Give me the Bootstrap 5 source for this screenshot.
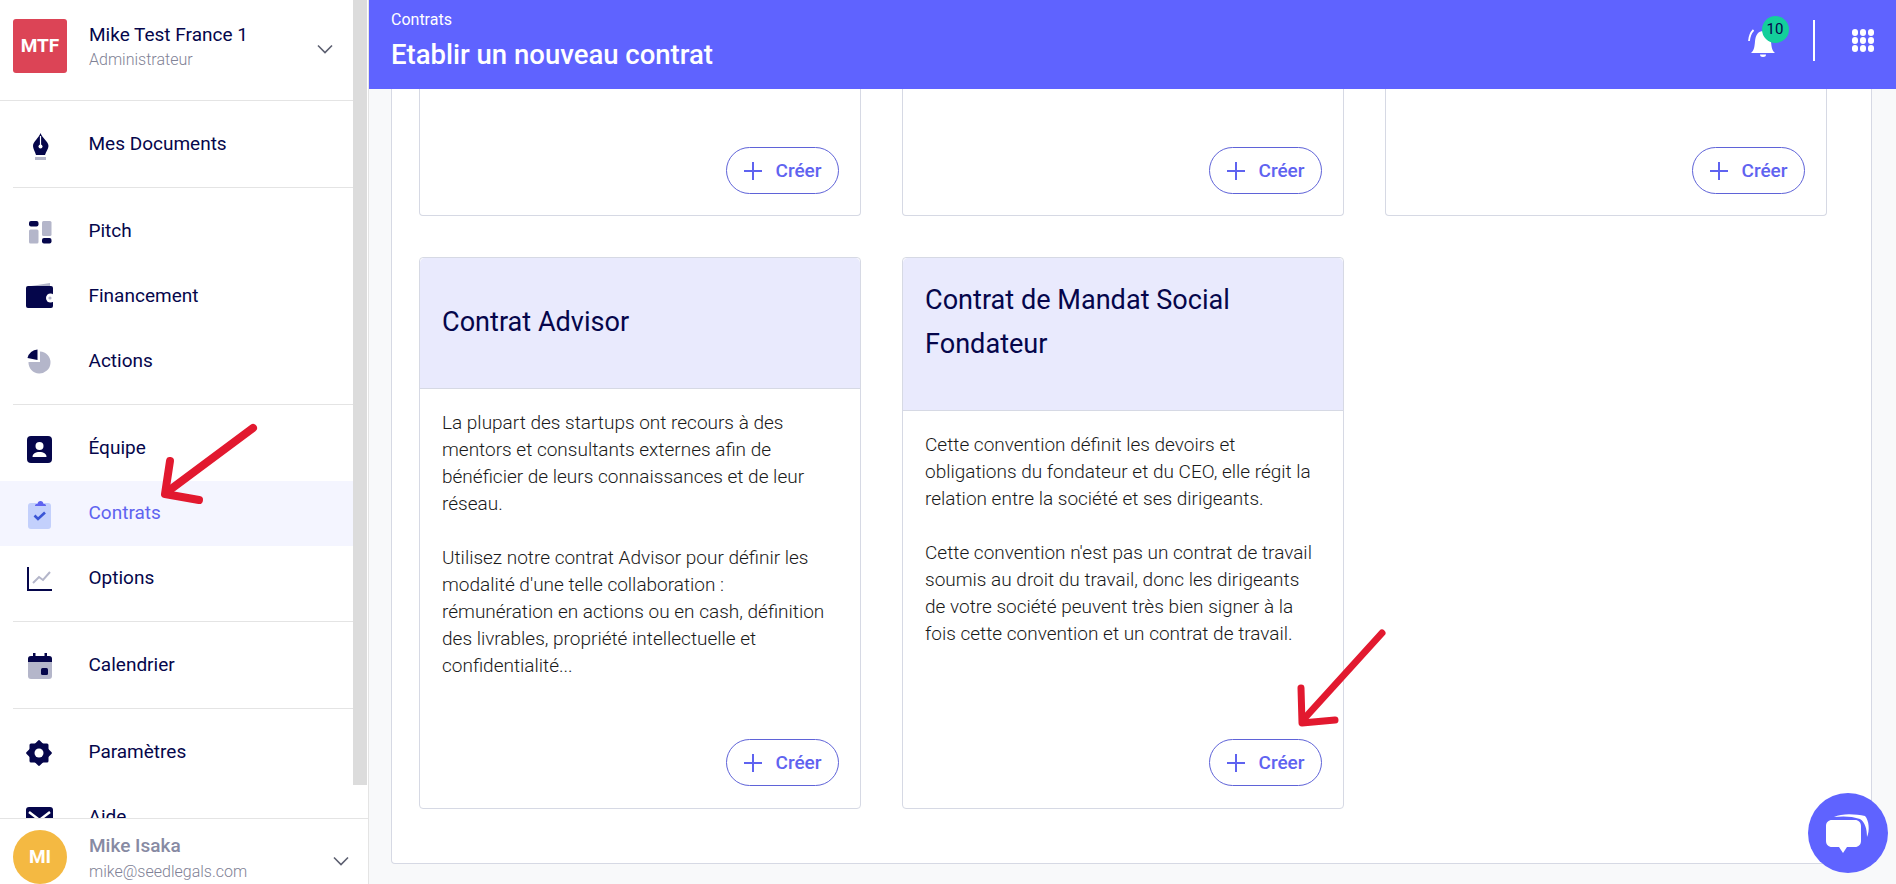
<!DOCTYPE html>
<html lang="fr">
<head>
  <meta charset="UTF-8"/>
  <title>Etablir un nouveau contrat</title>
  <link href="https://cdn.jsdelivr.net/npm/bootstrap@5.3.0/dist/css/bootstrap.min.css" rel="stylesheet"/>
  <style>
    body { font-family: Roboto, "Liberation Sans", sans-serif; color: #05064b; background: #f8f9fa; height: 884px; overflow: hidden; }

    /* sidebar */
    .side { width: 369px; flex: none; background: #fff; border-right: 1px solid #e4e4e4; height: 884px; }
    .side-scroll { height: 818px; overflow: hidden; }
    .side-inner { width: 353px; flex: none; }
    .scroll-track { width: 15px; flex: none; }
    .scroll-thumb { height: 785px; width: 14px; background: #dcdcdc; }
    .account { height: 101px; border-bottom: 1px solid #e4e4e4; padding: 19px 0 0 13px; }
    .logo-box { width: 54px; height: 54px; border-radius: 3px; background: #dc4456; color: #fff; font-weight: 700; font-size: 19px; }
    .who { margin-left: 22px; }
    .who-name { font-size: 19px; line-height: 24px; margin-top: 4px; }
    .who-role { font-size: 16px; line-height: 24px; margin-top: 1px; font-weight: 300; color: #7f8296; }
    .side-group { padding: 10.5px 0; margin-left: 13px; border-bottom: 1px solid #e4e4e4; }
    .side-group.last { border-bottom: 0; }
    .side-link { height: 65px; margin-left: -13px; padding-left: 23px; font-size: 19px; color: #05064b; text-decoration: none; }
    .side-link svg { margin-right: 33.5px; flex: none; }
    .side-link.on { background: #f4f5ff; color: #5f63f0; }
    .side-foot { height: 66px; border-top: 1px solid #e4e4e4; padding: 11px 0 0 13px; position: relative; background: #fff; }
    .face { width: 54px; height: 54px; border-radius: 50%; background: #f4b942; color: #fff; font-weight: 700; font-size: 19px; }
    .foot-name { font-size: 19px; font-weight: 500; line-height: 24px; color: #878aa3; margin-top: 4px; }
    .foot-mail { font-size: 16px; font-weight: 300; line-height: 24px; margin-top: 2px; color: #7f8296; }
    .foot-arrow { margin: 25px 19px 0 0; }
    .acct-arrow { margin: 24px 20px 0 0; }

    /* header */
    .topbar { height: 89px; background: #5f63ff; color: #fff; padding: 0 22px; flex: none; position: relative; z-index: 2; }
    .crumb { font-size: 16px; line-height: 20px; padding-top: 10px; }
    .page-title { font-size: 27.5px; font-weight: 500; line-height: 34px; margin: 8px 0 0; }
    .bar-tools { padding-top: 20px; }
    .bell-wrap { width: 40px; height: 40px; position: relative; }
    .bell-count { position: absolute; left: 18.5px; top: -5px; width: 27px; height: 27px; border-radius: 50%; background: #14cf9b; color: #05064b; font-size: 15px; }
    .bar-sep { width: 2px; height: 41px; background: #fff; margin: 0 36.5px 0 30px; }
    .dots { display: grid; grid-template-columns: repeat(3, 6.5px); gap: 1.5px; }
    .dots i { width: 6.5px; height: 6.5px; border-radius: 50%; background: #fff; display: block; }

    /* panel with cards */
    .panel { width: 1481px; height: 775px; margin-left: 22px; padding: 0 44px 0 27px; background: #fff; border: 1px solid #d6d9e4; border-top: 0; border-radius: 0 0 4px 4px; }
    .deck { --bs-gutter-x: 41px; --bs-gutter-y: 41px; }
    .cut-card { height: 127px; }
    .full-card { height: 552px; }
    .cut-card, .full-card { border-color: #d6d9e4; border-radius: 4px; }
    .cut-card { border-top: 0; border-top-left-radius: 0; border-top-right-radius: 0; }
    .deal-head { min-height: 131px; padding: 43px 22px; background: #e9eafd; border-bottom-color: #d6d9e4; }
    .deal-head.two-line { padding: 21px 22px 44px; }
    .deal-title { font-size: 27.1px; font-weight: 400; line-height: 43.5px; margin: 0; color: #05064b; }
    .deal-body { padding: 20px 22px 22px; font-size: 19px; line-height: 27px; font-weight: 300; color: #1a1a1a; }
    .cut-card .deal-body { padding-bottom: 21px; }
    .make-btn { width: 113px; height: 47px; margin-right: -1px; border: 1px solid #5f63d8; border-radius: 24px; background: #fff; color: #5f63f0; font-size: 19px; font-weight: 500; padding: 0; }
    .make-btn svg { margin-right: 12px; }

    /* things that sit over the page */
    .chat-btn { position: absolute; left: 1808px; top: 793px; width: 80px; height: 80px; border-radius: 50%; background: #5f63ff; z-index: 5; }
    .red-arrow { position: absolute; left: 0; top: 0; z-index: 6; pointer-events: none; }
  </style>
</head>
<body class="d-flex position-relative">

  <!-- Sidebar -->
  <aside class="side d-flex flex-column">
    <div class="side-scroll d-flex">
      <div class="side-inner">
        <div class="account d-flex">
          <div class="logo-box d-flex align-items-center justify-content-center">MTF</div>
          <div class="who flex-grow-1">
            <div class="who-name">Mike Test France 1</div>
            <div class="who-role">Administrateur</div>
          </div>
          <svg class="acct-arrow" width="16" height="12" viewBox="0 0 16 12" fill="none" stroke="#5c5f70" stroke-width="1.6"><path d="M1 2.5l7 7 7-7"/></svg>
        </div>

        <div class="side-group">
          <a class="side-link d-flex align-items-center" href="#">
            <svg width="32" height="32" viewBox="0 0 32 32"><path d="M17.5 5C16 10 10 13.500 10 18c0 2.500 2 5.500 3 9h9c1-3.500 3.500-6.500 3.500-9C25.500 13.500 19 10 17.500 5z" fill="#05064b"/><path d="M17.500 8v9" stroke="#fff" stroke-width="1.200"/><circle cx="17.500" cy="18.500" r="2" fill="#fff"/><rect x="12" y="29" width="11" height="3" fill="#b4b6ca"/></svg>
            Mes Documents
          </a>
        </div>

        <div class="side-group">
          <a class="side-link d-flex align-items-center" href="#">
            <svg width="32" height="32" viewBox="0 0 32 32"><rect x="6" y="6" width="9.500" height="5.500" rx="2" fill="#05064b"/><rect x="6" y="14.500" width="9.500" height="14" rx="1.500" fill="#b4b6ca"/><rect x="19" y="6" width="9.500" height="15" rx="1.500" fill="#b4b6ca"/><rect x="19" y="23" width="9.500" height="5.500" rx="2" fill="#05064b"/></svg>
            Pitch
          </a>
          <a class="side-link d-flex align-items-center" href="#">
            <svg width="32" height="32" viewBox="0 0 32 32"><path d="M8 6L27 3v3z" fill="#b4b6ca"/><rect x="3" y="6" width="27" height="22" rx="2" fill="#05064b"/><circle cx="27.500" cy="18" r="4.500" fill="#fff"/><circle cx="27" cy="18" r="1.600" fill="#b4b6ca"/></svg>
            Financement
          </a>
          <a class="side-link d-flex align-items-center" href="#">
            <svg width="32" height="32" viewBox="0 0 32 32"><path d="M17 6.500a11 11 0 1 1-11.500 10.500H17z" fill="#b4b6ca"/><path d="M14.500 4.500v10.500L4.500 13a11 11 0 0 1 10-8.500z" fill="#05064b"/></svg>
            Actions
          </a>
        </div>

        <div class="side-group">
          <a class="side-link d-flex align-items-center" href="#">
            <svg width="32" height="32" viewBox="0 0 32 32"><rect x="4" y="4" width="25" height="27" rx="4" fill="#05064b"/><circle cx="16.500" cy="14" r="4" fill="#fff"/><path d="M9.500 25c0-3.500 3-5 7-5s7 1.500 7 5z" fill="#fff"/></svg>
            Équipe
          </a>
          <a class="side-link on d-flex align-items-center" href="#">
            <svg width="32" height="32" viewBox="0 0 32 32"><rect x="5" y="6" width="23" height="26" rx="3" fill="#c3d0fc"/><path d="M12 9c0-1.500.5-2 2.500-2 .3-2 1.200-3 3-3s2.700 1 3 3c2 0 2.500.5 2.500 2z" fill="#5f63f0"/><path d="M11.500 18.500l3.500 3.500 7-6.500" fill="none" stroke="#3a55d6" stroke-width="2.600"/></svg>
            Contrats
          </a>
          <a class="side-link d-flex align-items-center" href="#">
            <svg width="32" height="32" viewBox="0 0 32 32"><path d="M5 5v23h24" fill="none" stroke="#05064b" stroke-width="2"/><path d="M10 21l6-6 4 3 7-8" fill="none" stroke="#b4b6ca" stroke-width="2"/></svg>
            Options
          </a>
        </div>

        <div class="side-group">
          <a class="side-link d-flex align-items-center" href="#">
            <svg width="32" height="32" viewBox="0 0 32 32"><rect x="5" y="7" width="24" height="23" rx="3" fill="#b4b6ca"/><path d="M5 13v-3a3 3 0 0 1 3-3h18a3 3 0 0 1 3 3v3z" fill="#05064b"/><rect x="10" y="4" width="2.500" height="4" fill="#05064b"/><rect x="21.500" y="4" width="2.500" height="4" fill="#05064b"/><rect x="18" y="19" width="7" height="7" rx="1.500" fill="#05064b"/></svg>
            Calendrier
          </a>
        </div>

        <div class="side-group last">
          <a class="side-link d-flex align-items-center" href="#">
            <svg width="32" height="32" viewBox="0 0 32 32"><rect x="6.500" y="7.500" width="19" height="19" rx="1.500" fill="#05064b"/><rect x="6.500" y="7.500" width="19" height="19" rx="1.500" fill="#05064b" transform="rotate(45 16 17)"/><circle cx="16" cy="17" r="4.500" fill="#fff"/></svg>
            Paramètres
          </a>
          <a class="side-link d-flex align-items-center" href="#">
            <svg width="32" height="32" viewBox="0 0 32 32"><rect x="3" y="6" width="27" height="21" rx="3" fill="#05064b"/><path d="M6 11l10.500 8L27 11" fill="none" stroke="#fff" stroke-width="2.500"/></svg>
            Aide
          </a>
        </div>
      </div>
      <div class="scroll-track ms-auto"><div class="scroll-thumb"></div></div>
    </div>

    <div class="side-foot d-flex">
      <div class="face d-flex align-items-center justify-content-center">MI</div>
      <div class="who flex-grow-1">
        <div class="foot-name">Mike Isaka</div>
        <div class="foot-mail">mike@seedlegals.com</div>
      </div>
      <svg class="foot-arrow" width="16" height="12" viewBox="0 0 16 12" fill="none" stroke="#5c5f70" stroke-width="1.6"><path d="M1 2.500l7 7 7-7"/></svg>
    </div>
  </aside>

  <!-- Main -->
  <main class="flex-grow-1 d-flex flex-column overflow-hidden">
    <header class="topbar d-flex justify-content-between align-items-start">
      <div>
        <div class="crumb">Contrats</div>
        <h1 class="page-title">Etablir un nouveau contrat</h1>
      </div>
      <div class="bar-tools d-flex align-items-center">
        <div class="bell-wrap">
          <svg width="40" height="40" viewBox="0 0 40 40"><path d="M8 32c3-2.500 3.500-6 4-11.500C12.500 14 15.500 10 20 10s7.500 4 8 10.500c.5 5.500 1 9 4 11.500z" fill="#fff"/><path d="M17 33.500h6a3 2.500 0 0 1-6 0z" fill="#fff"/><path d="M6 20c.3-4 1.500-8 4.500-11" fill="none" stroke="#fff" stroke-width="1.800"/></svg>
          <span class="bell-count d-flex align-items-center justify-content-center">10</span>
        </div>
        <div class="bar-sep"></div>
        <div class="dots"><i></i><i></i><i></i><i></i><i></i><i></i><i></i><i></i><i></i></div>
      </div>
    </header>

    <section class="panel">
      <div class="row row-cols-3 deck">
        <div class="col">
          <div class="card cut-card"><div class="mt-auto d-flex justify-content-end deal-body"><button class="make-btn d-flex align-items-center justify-content-center"><svg width="20" height="20" viewBox="0 0 20 20" stroke="#5f63f0" stroke-width="2"><path d="M10 1v18M1 10h18"/></svg>Créer</button></div></div>
        </div>
        <div class="col">
          <div class="card cut-card"><div class="mt-auto d-flex justify-content-end deal-body"><button class="make-btn d-flex align-items-center justify-content-center"><svg width="20" height="20" viewBox="0 0 20 20" stroke="#5f63f0" stroke-width="2"><path d="M10 1v18M1 10h18"/></svg>Créer</button></div></div>
        </div>
        <div class="col">
          <div class="card cut-card"><div class="mt-auto d-flex justify-content-end deal-body"><button class="make-btn d-flex align-items-center justify-content-center"><svg width="20" height="20" viewBox="0 0 20 20" stroke="#5f63f0" stroke-width="2"><path d="M10 1v18M1 10h18"/></svg>Créer</button></div></div>
        </div>

        <div class="col">
          <div class="card full-card">
            <div class="card-header deal-head d-flex align-items-center"><h2 class="deal-title">Contrat Advisor</h2></div>
            <div class="card-body deal-body d-flex flex-column">
              <div>La plupart des startups ont recours à des mentors et consultants externes afin de bénéficier de leurs connaissances et de leur réseau.<br><br>Utilisez notre contrat Advisor pour définir les modalité d'une telle collaboration : rémunération en actions ou en cash, définition des livrables, propriété intellectuelle et confidentialité...</div>
              <div class="mt-auto d-flex justify-content-end"><button class="make-btn d-flex align-items-center justify-content-center"><svg width="20" height="20" viewBox="0 0 20 20" stroke="#5f63f0" stroke-width="2"><path d="M10 1v18M1 10h18"/></svg>Créer</button></div>
            </div>
          </div>
        </div>
        <div class="col">
          <div class="card full-card">
            <div class="card-header deal-head two-line"><h2 class="deal-title">Contrat de Mandat Social Fondateur</h2></div>
            <div class="card-body deal-body d-flex flex-column">
              <div>Cette convention définit les devoirs et obligations du fondateur et du CEO, elle régit la relation entre la société et ses dirigeants.<br><br>Cette convention n'est pas un contrat de travail soumis au droit du travail, donc les dirigeants de votre société peuvent très bien signer à la fois cette convention et un contrat de travail.</div>
              <div class="mt-auto d-flex justify-content-end"><button class="make-btn d-flex align-items-center justify-content-center"><svg width="20" height="20" viewBox="0 0 20 20" stroke="#5f63f0" stroke-width="2"><path d="M10 1v18M1 10h18"/></svg>Créer</button></div>
            </div>
          </div>
        </div>
      </div>
    </section>
  </main>

  <!-- Chat bubble -->
  <div class="chat-btn d-flex align-items-center justify-content-center">
    <svg width="48" height="44" viewBox="0 0 48 44"><path d="M10 6C18 2 32 3 41 5c4 4 5 15 2 21 0-8-2-15-7-18C28 5 18 5 10 6z" fill="#fff"/><path d="M8 9h23c3.500 0 6 2.500 6 6v15c0 3.500-2.500 6-6 6h-8l-4 6-4-6H8c-3.500 0-6-2.500-6-6V15c0-3.500 2.500-6 6-6z" fill="#fff"/></svg>
  </div>

  <!-- Red annotation arrows -->
  <svg class="red-arrow" width="1896" height="884" viewBox="0 0 1896 884" fill="none" stroke="#e2192f" stroke-linecap="round" stroke-linejoin="round">
    <path d="M253 428L167 492" stroke-width="8"/>
    <path d="M170 461L165 494L199 500" stroke-width="8"/>
    <path d="M1382 633L1303 720" stroke-width="7"/>
    <path d="M1301 688L1302 723L1335 720" stroke-width="7"/>
  </svg>
</body>
</html>
